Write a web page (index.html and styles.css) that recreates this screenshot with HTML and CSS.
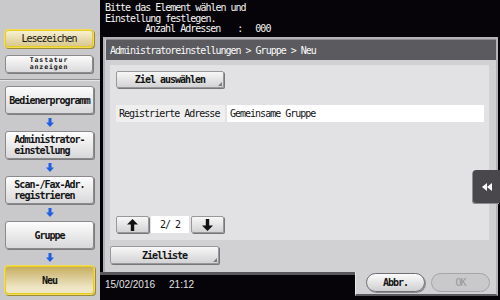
FILE: index.html
```html
<!DOCTYPE html>
<html lang="de">
<head>
	<meta charset="UTF-8">
	<title>Gruppe - Neu</title>
	<link rel="stylesheet" href="styles.css">
</head>
<body>
	<aside class="sidebar">
		<div class="sidebar-top">
			<div class="side-btn side-btn--bookmark">Lesezeichen</div>
			<div class="side-btn side-btn--small">Tastatur<br>anzeigen</div>
		</div>

		<!-- menu trail -->
		<nav class="trail">
			<div class="trail-btn"><span>Bedienerprogramm</span></div>
			<div class="trail-arrow"><svg width="8" height="9" viewBox="0 0 8 9"><path d="M2.5 0h3v4.5H8L4 9 0 4.5h2.5z" fill="#1f5fe8"/></svg></div>
			<div class="trail-btn"><span>Administrator-<br>einstellung</span></div>
			<div class="trail-arrow"><svg width="8" height="9" viewBox="0 0 8 9"><path d="M2.5 0h3v4.5H8L4 9 0 4.5h2.5z" fill="#1f5fe8"/></svg></div>
			<div class="trail-btn"><span>Scan-/Fax-Adr.<br>registrieren</span></div>
			<div class="trail-arrow"><svg width="8" height="9" viewBox="0 0 8 9"><path d="M2.5 0h3v4.5H8L4 9 0 4.5h2.5z" fill="#1f5fe8"/></svg></div>
			<div class="trail-btn"><span>Gruppe</span></div>
			<div class="trail-arrow"><svg width="8" height="9" viewBox="0 0 8 9"><path d="M2.5 0h3v4.5H8L4 9 0 4.5h2.5z" fill="#1f5fe8"/></svg></div>
			<div class="trail-btn trail-btn--current"><span>Neu</span></div>
		</nav>
	</aside>

	<main class="screen">
		<div class="message">
			<div>Bitte das Element wählen und</div>
			<div>Einstellung festlegen.</div>
			<div class="count"><span>Anzahl Adressen</span><span class="count-sep">:</span><span class="count-value">000</span></div>
		</div>

		<section class="window">
			<div class="titlebar">Administratoreinstellungen &gt; Gruppe &gt; Neu</div>
			<div class="window-body">
				<div class="panel">
					<div class="btn btn-menu btn-target">Ziel auswählen</div>
					<div class="field-row">
						<span class="field-label">Registrierte Adresse</span>
						<span class="field-value">Gemeinsame Gruppe</span>
					</div>
					<div class="pager">
						<div class="btn pager-btn"><svg width="11" height="12" viewBox="0 0 11 12"><path d="M5.5 0 11 5.5H7.2V12H3.8V5.5H0z" fill="#111"/></svg></div>
						<div class="pager-count">2/ 2</div>
						<div class="btn pager-btn"><svg width="11" height="12" viewBox="0 0 11 12"><path d="M5.5 12 11 6.5H7.2V0H3.8v6.5H0z" fill="#111"/></svg></div>
					</div>
				</div>
				<div class="btn btn-menu btn-list">Zielliste</div>
			</div>

			<!-- collapse tab on the right edge -->
			<div class="side-tab">
				<svg width="10" height="8" viewBox="0 0 10 8"><path d="M0 4 5 0v8zM5 4l5-4v8z" fill="#fff"/></svg>
			</div>
		</section>

		<footer class="footer">
			<div class="status">
				<span>15/02/2016</span>
				<span>21:12</span>
			</div>
			<div class="actions">
				<div class="pill">Abbr.</div>
				<div class="pill pill--disabled">OK</div>
			</div>
		</footer>
	</main>
</body>
</html>
```

FILE: styles.css
```css
*,
*::before,
*::after {
	margin: 0;
	padding: 0;
	box-sizing: border-box;
}

:root {
	--screen-black: #060409;
	--panel-gray: #d1d0d3;
	--panel-light: #e2e1e4;
	--title-gray: #5b5a5f;
	--frame-gray: #b3b3b6;
	--text-dark: #141414;
	--mono: "DejaVu Sans Mono", "Liberation Mono", monospace;
}

html, body {
	width: 500px;
	height: 300px;
	overflow: hidden;
}

body {
	display: flex;
	background: var(--screen-black);
	font-family: var(--mono);
	font-size: 10px;
	letter-spacing: -1px;
	color: var(--text-dark);
}

/**
* Sidebar
*/
.sidebar {
	width: 100px;
	flex-shrink: 0;
	background: #c9c9cb;
}

.sidebar-top {
	height: 80px;
	padding: 30px 0 0 5px;
	display: flex;
	flex-direction: column;
	gap: 8px;
	border-bottom: 1px solid #8f8f92;
	box-shadow: 0 1px 0 #e4e4e6;
}

.side-btn {
	width: 88px;
	display: flex;
	align-items: center;
	justify-content: center;
	text-align: center;
	border: 1px solid #8a8a8d;
	border-radius: 3px;
	background: linear-gradient(#fbfbfb, #dadadc);
	box-shadow: 1px 1px 0 #7d7d80;
}

.side-btn--bookmark {
	height: 17px;
	border: 1px solid #e6cd20;
	box-shadow: 0 0 0 1px #f0dc5a, 1px 1px 0 1px #9a8a3a;
	background: linear-gradient(#f7f0d2, #d9c88e);
}

.side-btn--small {
	height: 18px;
	font-size: 6.5px;
	letter-spacing: 0.9px;
	line-height: 7px;
	font-weight: bold;
}

.trail {
	padding: 6px 0 0 5px;
	display: flex;
	flex-direction: column;
}

.trail-btn {
	width: 89px;
	height: 28px;
	display: flex;
	align-items: center;
	justify-content: center;
	font-weight: bold;
	line-height: 11px;
	border: 1px solid #8a8a8d;
	border-radius: 3px;
	background: linear-gradient(#fdfdfd, #d8d8da);
	box-shadow: 1px 1px 0 #7d7d80;
}

.trail-btn--current {
	border: 1px solid #e6cd20;
	box-shadow: 0 0 0 1px #f0dc5a, 1px 1px 0 1px #9a8a3a;
	background: linear-gradient(#c6ae62, #efe6c7 80%);
}

.trail-arrow {
	width: 89px;
	height: 17px;
	display: flex;
	align-items: center;
	justify-content: center;
}

/**
* Main screen
*/
.screen {
	flex: 1;
	display: flex;
	flex-direction: column;
}

.message {
	height: 37px;
	padding: 3px 0 0 5px;
	color: #f4f4f4;
	line-height: 10.5px;
}

.count {
	display: flex;
	padding-left: 40px;
}

.count-sep {
	margin-left: 17px;
}

.count-value {
	margin-left: 13px;
}

.window {
	position: relative;
	height: 235px;
	margin: 0 2px 0 3px;
	border: 2px solid var(--frame-gray);
	border-bottom: none;
	background: var(--panel-gray);
}

.titlebar {
	height: 20px;
	margin: 1px 0 0 1px;
	padding-left: 4px;
	display: flex;
	align-items: center;
	background: var(--title-gray);
	color: #fafafa;
	box-shadow: 0 -1px 0 #8d8c90;
}

.window-body {
	padding: 5px 7px 0 5px;
}

.panel {
	height: 175px;
	padding: 6px 5px 7px 6px;
	display: flex;
	flex-direction: column;
	background: var(--panel-light);
}

/* buttons */
.btn {
	position: relative;
	display: flex;
	align-items: center;
	justify-content: center;
	border: 1px solid #98979b;
	border-radius: 2px;
	background: linear-gradient(#f7f7f7, #d3d3d5);
	box-shadow: 1px 1px 0 #77767a;
}

.btn-menu {
	font-weight: bold;
}

.btn-menu::after {
	content: "";
	position: absolute;
	right: 1px;
	bottom: 1px;
	border-style: solid;
	border-width: 0 0 4px 4px;
	border-color: transparent transparent #7c7b7f transparent;
}

.btn-target {
	width: 108px;
	height: 17px;
}

.btn-list {
	width: 109px;
	height: 18px;
	margin-top: 6px;
}

.field-row {
	display: flex;
	gap: 2px;
	height: 17px;
	margin-top: 17px;
	line-height: 17px;
}

.field-label {
	width: 109px;
	padding-left: 3px;
	background: #efeff0;
}

.field-value {
	flex: 1;
	padding-left: 3px;
	background: #fff;
}

.pager {
	margin-top: auto;
	display: flex;
	gap: 2px;
	height: 17px;
}

.pager-btn {
	width: 33px;
}

.pager-count {
	width: 38px;
	display: flex;
	align-items: center;
	justify-content: center;
	background: #fff;
}

.side-tab {
	position: absolute;
	top: 131px;
	right: -4px;
	width: 27px;
	height: 33px;
	display: flex;
	align-items: center;
	justify-content: center;
	border-radius: 3px 0 0 3px;
	background: #49474c;
	box-shadow: -1px 1px 0 #8e8d91;
}

/**
* Footer
*/
.footer {
	flex: 1;
	display: flex;
}

.status {
	width: 255px;
	padding: 4px 0 0 5px;
	display: flex;
	gap: 14px;
	border-top: 3px solid #58575b;
	font-family: "Liberation Sans", Arial, sans-serif;
	font-size: 10px;
	letter-spacing: 0;
	line-height: 11px;
	color: #e2e2e2;
}

.actions {
	flex: 1;
	height: 24px;
	margin-right: 2px;
	padding: 1px 0 0 10px;
	display: flex;
	gap: 6px;
	background: var(--panel-gray);
	border-left: 1px solid #e6e6e8;
	border-right: 2px solid var(--frame-gray);
	border-bottom: 2px solid #5a595d;
}

.pill {
	width: 59px;
	height: 19px;
	display: flex;
	align-items: center;
	justify-content: center;
	font-weight: bold;
	border: 1px solid #6f6e72;
	border-radius: 10px;
	background: linear-gradient(#fbfbfb, #cfcfd1);
	box-shadow: 1px 1px 0 #8a898d;
}

.pill--disabled {
	color: #97969a;
	font-weight: normal;
	border-color: #a5a4a8;
	background: #c9c8cb;
	box-shadow: none;
}
```
